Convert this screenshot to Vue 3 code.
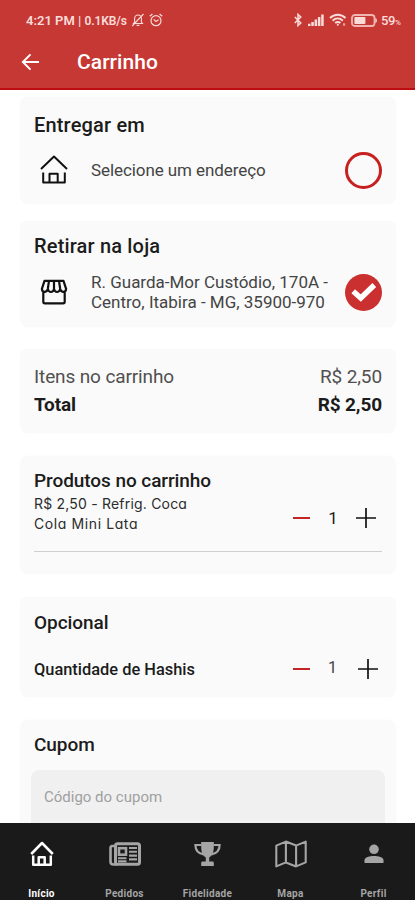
<script setup>
import { ref } from 'vue'

const productQty = ref(1)
const hashiQty = ref(1)
const tabs = [
  { id: 'home', label: 'Início' },
  { id: 'orders', label: 'Pedidos' },
  { id: 'loyalty', label: 'Fidelidade' },
  { id: 'map', label: 'Mapa' },
  { id: 'profile', label: 'Perfil' },
]
const active = ref('home')
</script>

<template>
  <div class="screen">
    <header class="header">
      <div class="status">
        <span class="clock">4:21 PM | <span class="rate">0.1KB/s</span></span>
        <svg class="bell" width="14" height="14" viewBox="0 0 14 14" fill="none" stroke="currentColor" stroke-width="1.1">
          <path d="M2.5 10.5h9L10.4 9V5.7C10.4 3.5 9 2 7 2S3.6 3.5 3.6 5.7V9zM5.6 12.4h2.8M12.5 1 1.2 13" />
        </svg>
        <svg class="alarm" width="14" height="14" viewBox="0 0 14 14" fill="none" stroke="currentColor" stroke-width="1.2">
          <circle cx="7" cy="7.7" r="5" /><path d="M.8 3.3 3.4 1M13.2 3.3 10.6 1M4.7 6.4 7 8.5l2.6-1.8" />
        </svg>
        <span class="grow"></span>
        <svg class="bt" width="8" height="14" viewBox="0 0 8 14" fill="none" stroke="currentColor" stroke-width="1.5">
          <path d="m.8 4 6 6L4 12.6V1.4L6.8 4l-6 6" />
        </svg>
        <svg class="signal" width="16" height="12" viewBox="0 0 16 12" fill="currentColor">
          <path d="M0 9.8h2.5V12H0zM3.3 8h2.5v4H3.3zM6.6 5.5h2.5V12H6.6zM9.9 3h2.5v9H9.9zM13.2.5h2.5V12h-2.5z" />
        </svg>
        <svg class="wifi" width="18" height="14" viewBox="0 0 18 14" fill="none" stroke="currentColor" stroke-width="2">
          <path d="M1 5C5.5.6 12 .6 16.5 5M3.6 7.7c3-2.8 7.2-2.8 10.2 0M6.2 10.1c1.6-1.4 3.6-1.4 5.2 0" />
          <circle cx="8.8" cy="11.8" r="1" fill="currentColor" stroke="none" /><path d="M14 11.5h2.2" stroke="#e8a294" stroke-width="2.4" />
        </svg>
        <svg class="battery" width="27" height="13" viewBox="0 0 27 13">
          <rect x="1" y="1" width="22.5" height="11" rx="2.8" fill="none" stroke="#f0b5b0" stroke-width="1.8" />
          <rect x="3.4" y="3" width="11" height="7" rx=".8" fill="currentColor" />
          <path d="M24.4 4c2 .5 2 4.5 0 5z" fill="currentColor" />
        </svg>
        <span class="level">59<small>%</small></span>
      </div>
      <div class="title-row">
        <svg width="19" height="18" viewBox="0 0 19 18" fill="none" stroke="currentColor" stroke-width="2">
          <path d="M18 9H2M9.5 1.4 1.9 9l7.6 7.6" />
        </svg>
        <h1>Carrinho</h1>
      </div>
    </header>

    <main class="content">
      <section class="card deliver">
        <h2>Entregar em</h2>
        <div class="option">
          <svg class="house" width="28" height="30" viewBox="0 0 28 30" fill="none" stroke="currentColor" stroke-width="2">
            <path d="M1 14 14 1.5 27 14M3.2 17.5v10h21.6v-10M9.5 27v-8.2h8.2V27" stroke-linejoin="round" />
          </svg>
          <p>Selecione um endereço</p>
          <span class="radio"></span>
        </div>
      </section>

      <section class="card pickup">
        <h2>Retirar na loja</h2>
        <div class="option">
          <svg class="store" width="28" height="26" viewBox="0 0 28 26" fill="none" stroke="currentColor" stroke-width="2.2" stroke-linejoin="round">
            <path d="M4.5 1.8h19l2.6 8c0 4-4.8 4-5.9.2-1.3 4-5.1 4-6.2 0-1.1 4-5 4-6.2 0-1.1 3.8-5.9 3.8-5.9-.2zM9 1.8 7.8 10M14 1.8V10M19 1.8l1.2 8.2M3.3 13v9.8q0 1.5 1.5 1.5h18.4q1.5 0 1.5-1.5V13" />
          </svg>
          <p class="address">R. Guarda-Mor Custódio, 170A -<br>Centro, Itabira - MG, 35900-970</p>
          <span class="radio checked">
            <svg width="26" height="20" viewBox="0 0 26 20" fill="none" stroke="#fff" stroke-width="5.4">
              <path d="m2.2 9.2 7.6 6.8L23.3 3" />
            </svg>
          </span>
        </div>
      </section>

      <section class="card totals">
        <div class="line items"><span>Itens no carrinho</span><span class="price">R$ 2,50</span></div>
        <div class="line total"><span>Total</span><span class="price">R$ 2,50</span></div>
      </section>

      <section class="card products">
        <h2>Produtos no carrinho</h2>
        <div class="product">
          <p>R$ 2,50 - Refrig. Coca<br><span class="second">Cola Mini Lata</span></p>
          <div class="stepper">
            <button class="minus" aria-label="Diminuir" @click="productQty--"><svg width="17" height="20" viewBox="0 0 17 20" stroke="currentColor" stroke-width="2"><path d="M0 10h17" /></svg></button>
            <span class="qty">{{ productQty }}</span>
            <button class="plus" aria-label="Aumentar" @click="productQty++"><svg width="20" height="20" viewBox="0 0 20 20" stroke="currentColor" stroke-width="1.7"><path d="M0 10h20M10 0v20" /></svg></button>
          </div>
        </div>
      </section>

      <section class="card optional">
        <h2>Opcional</h2>
        <div class="extra">
          <p>Quantidade de Hashis</p>
          <div class="stepper">
            <button class="minus" aria-label="Diminuir" @click="hashiQty--"><svg width="17" height="20" viewBox="0 0 17 20" stroke="currentColor" stroke-width="2"><path d="M0 10h17" /></svg></button>
            <span class="qty">{{ hashiQty }}</span>
            <button class="plus" aria-label="Aumentar" @click="hashiQty++"><svg width="20" height="20" viewBox="0 0 20 20" stroke="currentColor" stroke-width="1.7"><path d="M0 10h20M10 0v20" /></svg></button>
          </div>
        </div>
      </section>

      <section class="card coupon">
        <h2>Cupom</h2>
        <div class="field">Código do cupom</div>
      </section>
    </main>

    <nav class="tabs">
      <a v-for="tab in tabs" :key="tab.id" class="tab" :class="{ active: active === tab.id }" @click="active = tab.id">
        <span class="glyph">
          <svg v-if="tab.id === 'home'" width="24" height="26" viewBox="0 0 24 26" fill="none" stroke="currentColor" stroke-width="2.5">
            <path d="M1.2 13 12 2l10.8 11M3.2 14.5v9.3h17.6v-9.3M8.7 23.5v-7.3h6v7.3" stroke-linejoin="round" />
          </svg>
          <svg v-else-if="tab.id === 'orders'" width="32" height="24" viewBox="0 0 32 24" fill="none" stroke="currentColor">
            <rect x="6.5" y="1.7" width="24" height="20.6" rx="2" stroke-width="3" />
            <path d="M5 4H3.2Q1.5 4 1.5 6v13.5q0 3 3 3H8" stroke-width="2.6" />
            <rect x="10" y="6.2" width="7" height="6.5" stroke-width="2.6" />
            <path d="M20 6h8M20 9.8h8M20 13.6h8M9 16.2h8.5M20 17.4h8M9 19.4h8.5" stroke-width="2.1" />
          </svg>
          <svg v-else-if="tab.id === 'loyalty'" width="27" height="26" viewBox="0 0 27 26">
            <path d="M7.2 1h12.6v5c0 5.5-1.8 9.2-4.6 10.4v4.1h3.3q1.3 0 1.3 1.3V25H7.2v-3.2q0-1.3 1.3-1.3h3.3v-4.1C9 15.2 7.2 11.5 7.2 6z" fill="currentColor" />
            <path d="M7.5 4H1.4c0 5.4 3 8.5 8.2 9.4M19.5 4h6.1c0 5.4-3 8.5-8.2 9.4" fill="none" stroke="currentColor" stroke-width="2.2" />
          </svg>
          <svg v-else-if="tab.id === 'map'" width="32" height="28" viewBox="0 0 32 28" fill="none" stroke="currentColor" stroke-width="2.1" stroke-linejoin="round">
            <path d="m1.3 5.6 9.6-4 10.2 4 9.6-4v20.8l-9.6 4-10.2-4-9.6 4zM10.9 1.6v20.8M21.1 5.6v20.8" />
          </svg>
          <svg v-else width="20" height="20" viewBox="0 0 20 20" fill="currentColor">
            <circle cx="10" cy="5.3" r="4.8" /><path d="M.5 19v-2.8C.5 13.2 5.7 12 10 12s9.5 1.2 9.5 4.2V19z" />
          </svg>
        </span>
        <span class="label">{{ tab.label }}</span>
      </a>
    </nav>
  </div>
</template>

<style>
body { background: #fff; }
</style>

<style scoped>
.screen {
  width: 415px;
  height: 900px;
  display: flex;
  flex-direction: column;
  overflow: hidden;
  background: #fff;
  font-family: Roboto, "Liberation Sans", sans-serif;
  color: #1c1c1c;
}
h1, h2, p { margin: 0; font-weight: 500; }
svg { display: block; flex: none; }

.header {
  flex: none;
  box-sizing: border-box;
  height: 90px;
  border-bottom: 2px solid #bd0d10;
  background: #c63834;
  color: #fff;
}
.status {
  display: flex;
  align-items: center;
  height: 40px;
  padding: 0 13px 0 26px;
  color: #fbdcd9;
}
.clock { font-size: 13px; font-weight: 600; letter-spacing: 0; white-space: nowrap; width: 102px; }
.rate { font-size: 12px; letter-spacing: -.1px; }
.bell { margin-left: 3px; }
.alarm { margin-left: 4px; }
.grow { flex: 1; }
.signal { margin-left: 6px; }
.wifi { margin-left: 5px; }
.battery { margin-left: 4px; }
.level { width: 21px; margin-left: 3px; font-size: 13px; font-weight: 500; letter-spacing: -.4px; white-space: nowrap; }
.level small { font-size: 8px; }
.title-row { display: flex; align-items: center; height: 44px; padding-left: 21px; }
.title-row h1 { margin-left: 37px; font-size: 21px; line-height: 24px; letter-spacing: .05px; }

.content { flex: 1; min-height: 0; overflow: hidden; padding: 7px 19px 0 20px; }
.card {
  box-sizing: border-box;
  padding: 0 14px;
  border-radius: 8px;
  background: #fafafa;
  box-shadow: 0 0 3px #fafafa;
  overflow: hidden;
}
h2 { font-size: 19px; line-height: 24px; letter-spacing: -.07px; white-space: nowrap; }
.deliver h2, .pickup h2 { font-size: 20px; letter-spacing: .17px; }
.option { display: flex; align-items: center; }
.option svg { color: #111; }
.option p {
  flex: 1;
  margin-left: 23px;
  font-size: 17px;
  font-weight: 400;
  line-height: 20px;
  letter-spacing: -.08px;
  color: #444;
  white-space: nowrap;
}
.option .address { letter-spacing: 0; }
.house, .store { margin-left: 6px; }
.radio {
  flex: none;
  box-sizing: border-box;
  display: flex;
  align-items: center;
  justify-content: center;
  width: 37px;
  height: 37px;
  border: 3px solid #c6201f;
  border-radius: 50%;
}
.radio.checked { border: 0; background: #c9302f; }
.option .radio svg { margin: 0; }

.deliver { height: 107px; padding-top: 16px; }
.deliver .option { margin-top: 14px; height: 38px; }
.pickup { height: 106px; margin-top: 17px; padding-top: 13px; }
.pickup .option { margin-top: 14px; height: 40px; }

.totals { height: 84px; margin-top: 22px; padding-top: 14px; }
.line { display: flex; justify-content: space-between; line-height: 28px; font-size: 19px; letter-spacing: -.12px; }
.items { color: #505050; font-weight: 400; }
.total { font-weight: 700; }

.products { height: 118px; margin-top: 23px; padding-top: 13px; }
.product {
  display: flex;
  justify-content: space-between;
  height: 58px;
  border-bottom: 1px solid #cfcfcf;
}
.product p {
  font-family: Inter, Lato, sans-serif;
  font-feature-settings: "cv11" 1;
  font-size: 14px;
  font-weight: 400;
  line-height: 20px;
  letter-spacing: .2px;
  color: #2c2c2c;
  padding-top: 1px;
}
.second { letter-spacing: .6px; }
.stepper { display: flex; align-items: center; height: 20px; }
.stepper button { padding: 0; border: 0; background: none; color: #111; }
.stepper .minus { color: #c32525; }
.qty { width: 10px; margin: 0 18px; font-size: 17px; text-align: center; }
.product .stepper { margin: 15px 6px 0 0; }

.optional { height: 100px; margin-top: 23px; padding-top: 14px; }
.extra { display: flex; justify-content: space-between; align-items: center; margin-top: 23px; height: 22px; }
.extra p { font-size: 16.4px; padding-top: 1px; }
.extra .stepper { margin-right: 4.5px; }
.extra .qty { font-size: 16px; color: #444; margin: 0 20px 0 18px; padding-bottom: 3px; }

.coupon { height: 150px; margin-top: 23px; padding: 13px 11px 0; }
.coupon h2 { padding-left: 3px; }
.field {
  box-sizing: border-box;
  height: 60px;
  margin-top: 13px;
  padding-left: 13px;
  border-radius: 8px;
  background: #f0f0f0;
  color: #a0a0a0;
  font-size: 15px;
  line-height: 54px;
}

.tabs { flex: none; display: flex; height: 77px; background: #1a1a1a; overflow: hidden; }
.tab { flex: 1; display: flex; flex-direction: column; align-items: center; color: #a5a5a5; }
.tab.active { color: #fff; }
.glyph { display: flex; align-items: center; justify-content: center; height: 62px; }
.label { margin-top: 2px; font-size: 10px; font-weight: 700; line-height: 13px; letter-spacing: .3px; }
</style>
